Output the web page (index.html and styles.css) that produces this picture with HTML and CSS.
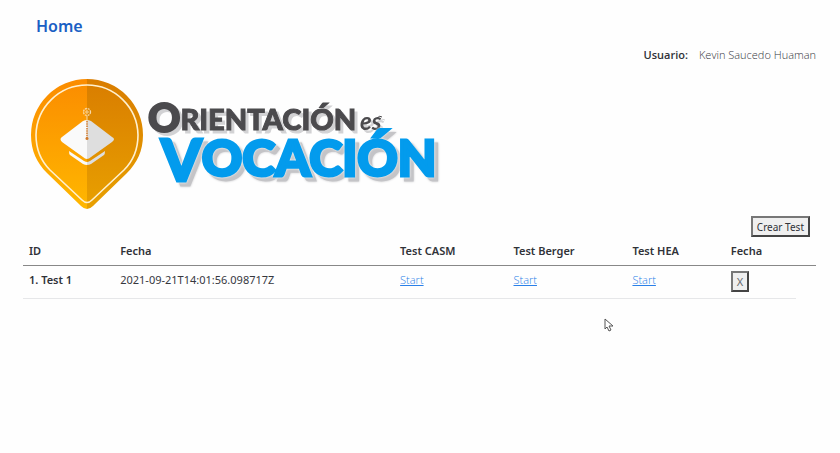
FILE: index.html
```html
<!DOCTYPE html>
<html lang="es">
<head>
<meta charset="utf-8">
<title>Orientación es Vocación</title>
<link rel="stylesheet" href="styles.css">
</head>
<body>
<nav class="nav"><a class="brand" href="#">Home</a></nav>
<main class="page">
  <p class="user"><strong>Usuario:</strong><span>Kevin Saucedo Huaman</span></p>
  <svg class="logo" viewBox="23 76 420 136" role="img" aria-label="Orientación es Vocación">
    <defs>
      <linearGradient id="pinLeft" x1="0" y1="0" x2="0" y2="1">
        <stop offset="0" stop-color="#fb8c00"/><stop offset="1" stop-color="#ffb700"/>
      </linearGradient>
      <linearGradient id="pinRight" x1="0" y1="0" x2="0" y2="1">
        <stop offset="0" stop-color="#d97d00"/><stop offset="1" stop-color="#e8a000"/>
      </linearGradient>
    </defs>
    <path fill="url(#pinLeft)" d="M87 79A56 56 0 0 0 31 135C31 151 37 163 47 173L81 206Q84 209 87 209Z"/>
    <path fill="url(#pinRight)" d="M87 79A56 56 0 0 1 143 135C143 151 137 163 127 173L93 206Q90 209 87 209Z"/>
    <path fill="none" stroke="#fff0cf" stroke-width="1.6" d="M87 85A51 51 0 0 0 36 135C36 150 41 161 50 170L82 200Q87 205 92 200L124 170C133 161 138 150 138 135A51 51 0 0 0 87 85Z"/>
    <path fill="#fafafa" d="M87 120Q85 120 83 121L62 137Q59 139 62 142L83 157Q85 159 87 159ZM69 151L84 161Q86 162 87 162V165Q85 165 83 164L70 155Q69 154 69 151Z"/>
    <path fill="#dedede" d="M87 120Q89 120 91 121L112 137Q116 139 112 142L91 157Q89 159 87 159ZM105 151L90 161Q88 162 87 162V165Q89 165 91 164L104 155Q105 154 105 151Z"/>
    <g fill="none" stroke="#f7d9a8">
      <circle cx="87" cy="112" r="3.5" stroke-width="1.3" stroke-dasharray="2 .8"/>
      <circle cx="87" cy="112" r="1.2"/>
      <path d="M87 116V121"/>
    </g>
    <path fill="none" stroke="#d17b2c" stroke-width="1.5" stroke-dasharray="1.5 .8" d="M87 121V138"/>
    <circle cx="87" cy="138.5" r="1.5" fill="#d17b2c"/>
    <g class="ink">
      <text class="top" x="148" y="132"><tspan class="top-initial">O</tspan><tspan dy="-2">RIENTACIÓN</tspan></text>
      <text class="script" x="360" y="130">es</text>
      <path class="swash" d="M377 118Q380 115 382 117"/>
    </g>
    <text class="bottom" x="161" y="181"><tspan class="bottom-initial">V</tspan><tspan dy="-5">OCACIÓN</tspan></text>
  </svg>
  <div class="actions"><button class="button" type="button">Crear Test</button></div>
  <table class="tests">
    <colgroup><col class="c-id"><col class="c-date"><col class="c-casm"><col class="c-berger"><col class="c-hea"><col class="c-remove"><col></colgroup>
    <thead>
      <tr><th>ID</th><th>Fecha</th><th>Test CASM</th><th>Test Berger</th><th>Test HEA</th><th colspan="2">Fecha</th></tr>
    </thead>
    <tbody>
      <tr><th scope="row">1. Test 1</th><td>2021-09-21T14:01:56.098717Z</td><td><a href="#">Start</a></td><td><a href="#">Start</a></td><td><a href="#">Start</a></td><td class="remove"><button class="button muted" type="button">X</button></td></tr>
    </tbody>
  </table>
</main>
<svg class="pointer" viewBox="0 0 10 14" aria-hidden="true"><path d="M1 1V11L3 9L5 13L7 12L5 8H9Z"/></svg>
</body>
</html>
```
FILE: styles.css
```css
* { box-sizing: border-box; }
body {
  margin: 0;
  background: #fefefe;
  color: #303238;
  font: 11px/16px "Open Sans", "Noto Sans", sans-serif;
}
.nav { padding: 14px 36px 9px; }
.brand {
  color: #1a5fc4;
  font-family: "Noto Sans", sans-serif;
  font-size: 16px;
  font-weight: 600;
  line-height: 24px;
  text-decoration: none;
}
.page { padding: 0 24px 0 23px; }
.user {
  display: flex;
  justify-content: flex-end;
  gap: 11px;
  margin: 0 0 13px;
}
.user span, td { color: #36383e; }
.user span, td a { font-weight: 300; }
strong, th { font-weight: 600; }
th, td { font-family: "Noto Sans", sans-serif; }
td a { font-family: "Open Sans", sans-serif; }
.logo { display: block; width: 420px; max-width: 100%; }
.top, .bottom { font-family: Lato, sans-serif; font-weight: 900; }
.top { font-size: 29px; stroke: #4b4a4d; stroke-width: 1; }
.top-initial { font-size: 40px; stroke-width: 2; }
.bottom {
  font-size: 50px;
  fill: #039bed;
  stroke: #039bed;
  stroke-width: 3;
  filter: drop-shadow(0 0 1px #fff) drop-shadow(4px 4px 0 #c4c4c7);
}
.bottom-initial { font-size: 58px; }
.script { font: italic 700 24px Lato, sans-serif; }
.ink { fill: #4b4a4d; filter: drop-shadow(3px 3px 0 #d2d2d4); }
.swash { fill: none; stroke: #4b4a4d; stroke-width: 1; }
.actions { display: flex; justify-content: flex-end; padding: 4px 6px 0 0; }
.button {
  height: 21px;
  padding: 0 4px;
  border: 2px solid;
  border-color: #777 #444 #444 #777;
  border-radius: 0;
  background: #efefef;
  color: #303238;
  font-family: "Noto Sans", sans-serif;
  font-size: 10px;
}
.muted { color: #66686c; font-size: 11px; }
.tests { width: 100%; border-collapse: collapse; table-layout: fixed; }
.c-id { width: 11.5%; }
.c-date { width: 35.3%; }
.c-casm { width: 14.3%; }
.c-berger { width: 15%; }
.c-hea { width: 12.4%; }
.c-remove { width: 9%; }
th, td { padding: 6px; text-align: left; vertical-align: top; white-space: nowrap; }
thead th { border-bottom: 1px solid #888; }
tbody th, td { border-bottom: 1px solid #e6e7e9; }
td.remove { padding-top: 5px; }
td a { color: #2a80e8; }
.remove .button { display: block; }
.pointer {
  position: absolute;
  left: 604px;
  top: 318px;
  width: 10px;
  height: 14px;
  fill: #fff;
  stroke: #555;
}
```
